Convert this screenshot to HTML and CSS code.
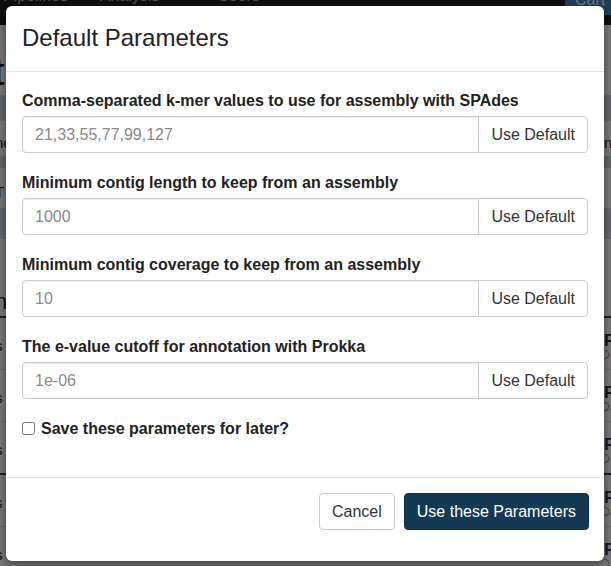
FILE: index.html
```html
<!DOCTYPE html>
<html lang="en">
<head>
<meta charset="utf-8">
<title>Default Parameters</title>
<link rel="stylesheet" href="styles.css">
</head>
<body>
<div class="page">
  <nav class="navbar">
    <ul class="nav">
      <li>Pipelines</li>
      <li>Analysis <span class="caret"></span></li>
      <li>Users <span class="caret"></span></li>
    </ul>
    <div class="cart">Cart</div>
  </nav>
  <main class="content">
    <h1 class="page-title">t</h1>
    <div class="band band-a"></div>
    <div class="row row-a"><span class="l">nc</span><span class="r">ni</span></div>
    <div class="band band-b"></div>
    <div class="row row-b"><span class="l">T</span><span class="r"></span></div>
    <div class="band band-c"></div>
    <div class="spacer"></div>
    <div class="row row-h"><span class="l big">n|</span><span class="r"></span></div>
    <div class="trow"><span class="l">s</span><span class="r"><b>F</b><small>Da</small></span></div>
    <div class="trow"><span class="l">s</span><span class="r"><b>F</b><small>Da</small></span></div>
    <div class="trow dark"><span class="l">s</span><span class="r"><b class="blue">F</b><small>Da</small></span></div>
    <div class="trow"><span class="l">s</span><span class="r"><b class="blue">F</b><small>Da</small></span></div>
    <div class="trow dark"><span class="l">s</span><span class="r"><b class="blue">F</b><small>Da</small></span></div>
  </main>
</div>
<div class="backdrop"></div>
<div class="modal">
  <div class="modal-header">
    <h4 class="modal-title">Default Parameters</h4>
  </div>
  <div class="modal-body">
    <div class="form-group">
      <label class="field-label">Comma-separated k-mer values to use for assembly with SPAdes</label>
      <div class="input-group">
        <input class="form-control" type="text" placeholder="21,33,55,77,99,127">
        <button class="btn btn-default addon" type="button">Use Default</button>
      </div>
    </div>
    <div class="form-group">
      <label class="field-label">Minimum contig length to keep from an assembly</label>
      <div class="input-group">
        <input class="form-control" type="text" placeholder="1000">
        <button class="btn btn-default addon" type="button">Use Default</button>
      </div>
    </div>
    <div class="form-group">
      <label class="field-label">Minimum contig coverage to keep from an assembly</label>
      <div class="input-group">
        <input class="form-control" type="text" placeholder="10">
        <button class="btn btn-default addon" type="button">Use Default</button>
      </div>
    </div>
    <div class="form-group">
      <label class="field-label">The e-value cutoff for annotation with Prokka</label>
      <div class="input-group">
        <input class="form-control" type="text" placeholder="1e-06">
        <button class="btn btn-default addon" type="button">Use Default</button>
      </div>
    </div>
    <label class="checkbox"><input type="checkbox"><span>Save these parameters for later?</span></label>
  </div>
  <div class="modal-footer">
    <button class="btn btn-default" type="button">Cancel</button>
    <button class="btn btn-primary" type="button">Use these Parameters</button>
  </div>
</div>
</body>
</html>
```

FILE: styles.css
```css
html, body {
  margin: 0;
  padding: 0;
}
body {
  width: 611px;
  height: 566px;
  position: relative;
  overflow: hidden;
  font-family: "Liberation Sans", Arial, sans-serif;
  color: #222;
}

/* ---------- background page ---------- */
.page {
  height: 566px;
  overflow: hidden;
  background: #f6f6f6;
}
.navbar {
  height: 25px;
  background: #1f1f1f;
  display: flex;
  justify-content: space-between;
  overflow: hidden;
}
.nav {
  display: flex;
  gap: 32px;
  list-style: none;
  margin: -13px 0 0 3px;
  padding: 0;
  font-size: 16px;
  line-height: 18px;
  color: #a8a8a8;
}
.caret {
  display: inline-block;
  width: 0;
  height: 0;
  margin-left: 14px;
  vertical-align: middle;
  border-top: 4px solid #a8a8a8;
  border-left: 4px solid transparent;
  border-right: 4px solid transparent;
}
.cart {
  width: 36px;
  height: 15px;
  padding-left: 10px;
  background: #3c7fb8;
  color: #e8eef5;
  font-size: 16px;
  line-height: 0;
  border-radius: 0 0 0 4px;
}
.content {
  padding-top: 25px;
}
.page-title {
  margin: 0 0 0 -6px;
  height: 45px;
  font-size: 38px;
  line-height: 44px;
  font-weight: normal;
  color: #111;
}
.band {
  background: #c6d3da;
  border-top: 1px solid #d8d8d8;
}
.band-a { height: 24px; }
.band-b { height: 11px; }
.band-c { height: 30px; }
.row, .trow {
  display: grid;
  grid-template-columns: 8px 1fr 7px;
  font-size: 15px;
  color: #222;
  overflow: hidden;
}
.row .r, .trow .r { grid-column: 3; white-space: nowrap; overflow: hidden; }
.row .l, .trow .l { white-space: nowrap; margin-left: -5px; }
.row-a { height: 35px; line-height: 44px; border-top: 1px solid #ddd; }
.row-b { height: 40px; line-height: 48px; }
.spacer { height: 52px; }
.row-h { height: 25px; line-height: 22px; border-bottom: 2px solid #2a3f54; }
.big { font-size: 22px; }
.trow {
  height: 51px;
  border-bottom: 1px solid #d6d6d6;
  line-height: 1;
}
.trow.dark { border-bottom: 2px solid #2a3f54; }
.trow .l { padding-top: 20px; }
.trow .r { display: flex; flex-direction: column; padding-top: 14px; }
.trow b { font-size: 17px; color: #2a2a2a; }
.trow b.blue { color: #1a3a6e; }
.trow small { font-size: 12px; color: #999; margin-left: -3px; }

.backdrop {
  position: absolute;
  inset: 0;
  background: rgba(0, 0, 0, 0.5);
}

/* ---------- modal ---------- */
.modal {
  position: absolute;
  top: 6px;
  left: 6px;
  width: 598px;
  background: #fff;
  border-radius: 6px;
  box-shadow: 0 4px 12px rgba(0, 0, 0, 0.5);
}
.modal-header {
  padding: 19px 16px 20px;
  border-bottom: 1px solid #e5e5e5;
}
.modal-title {
  margin: 0;
  font-size: 24px;
  line-height: 26px;
  font-weight: normal;
  color: #222;
}
.modal-body {
  padding: 17px 16px 16px;
}
.form-group {
  margin-bottom: 18px;
}
.field-label {
  display: block;
  margin-bottom: 4px;
  font-size: 16px;
  line-height: 23px;
  font-weight: bold;
  color: #222;
}
.input-group {
  display: flex;
  height: 37px;
}
.form-control {
  flex: 1;
  min-width: 0;
  box-sizing: border-box;
  height: 37px;
  margin: 0;
  padding: 0 12px;
  border: 1px solid #ccc;
  border-radius: 4px 0 0 4px;
  box-shadow: inset 0 1px 1px rgba(0, 0, 0, 0.075);
  font-family: inherit;
  font-size: 16px;
  color: #555;
  outline: none;
}
.form-control::placeholder {
  color: #888;
}
.btn {
  box-sizing: border-box;
  height: 37px;
  margin: 0;
  padding: 0 12px;
  border: 1px solid #ccc;
  border-radius: 4px;
  background: #fff;
  font-family: inherit;
  font-size: 16px;
  line-height: 35px;
  color: #333;
  white-space: nowrap;
  cursor: pointer;
}
.addon {
  margin-left: -1px;
  border-radius: 0 4px 4px 0;
}
.checkbox {
  display: flex;
  align-items: center;
  margin: 0 0 21px;
  height: 23px;
  font-size: 16px;
  font-weight: bold;
  color: #222;
}
.checkbox input {
  width: 13px;
  height: 13px;
  margin: 0 6px 0 0;
}
.modal-footer {
  display: flex;
  justify-content: flex-end;
  gap: 9px;
  padding: 15px 15px 31px;
  border-top: 1px solid #e5e5e5;
}
.btn-primary {
  background: #133a52;
  border-color: #0f3046;
  color: #fff;
}
```
